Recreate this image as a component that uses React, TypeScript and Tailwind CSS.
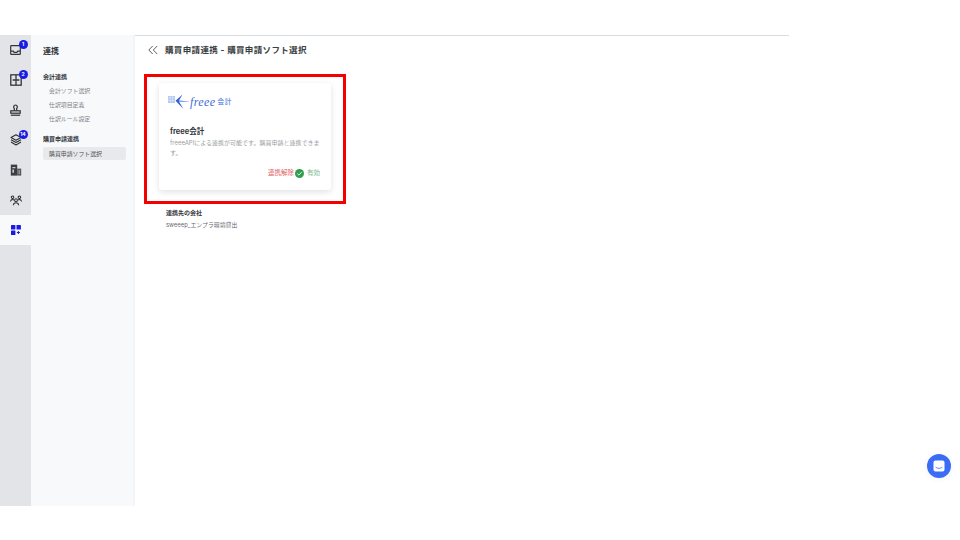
import React from "react";

const font = { fontFamily: '"Inter","Noto Sans CJK JP",sans-serif' };

function Badge({ n }: { n: string }) {
  return (
    <span className="absolute -top-[4px] left-[9px] flex h-[9px] w-[9px] items-center justify-center rounded-full bg-[#1a1ae6] text-[5px] font-bold leading-none text-white">
      {n}
    </span>
  );
}

function Inbox() {
  return (
    <svg width="11" height="10" viewBox="0 0 11 10" fill="none" stroke="#33363a" strokeWidth="1.2">
      <rect x="0.7" y="0.7" width="9.6" height="8.6" rx="0.6" />
      <path d="M0.7 6.2h2.6l.8 1.2h2.8l.8-1.2h2.6" />
    </svg>
  );
}
function Split() {
  return (
    <svg width="12" height="12" viewBox="0 0 12 12" fill="none" stroke="#33363a" strokeWidth="1.3">
      <rect x="0.8" y="0.8" width="10.4" height="10.4" />
      <path d="M6 1v10M2.6 6h6.8" />
    </svg>
  );
}
function Stamp() {
  return (
    <svg width="11" height="12" viewBox="0 0 11 12" fill="none" stroke="#2a2d31" strokeWidth="1.2">
      <path d="M4.3 6.8V4.4C3.7 3.9 3.5 3.3 3.7 2.5 3.9 1.6 4.6 1 5.5 1s1.6.6 1.8 1.5c.2.8 0 1.4-.6 1.9v2.4" />
      <rect x="0.8" y="6.8" width="9.4" height="2.4" />
      <path d="M0.8 11.2h9.4" />
    </svg>
  );
}
function Layers() {
  return (
    <svg width="12" height="12" viewBox="0 0 12 12" fill="none" stroke="#2a2d31" strokeWidth="1.1" strokeLinejoin="round">
      <path d="M6 .8 11 3.6 6 6.2 1 3.6Z" />
      <path d="M1 5.8 6 8.4l5-2.6" />
      <path d="M1 8.1 6 11l5-2.9" />
    </svg>
  );
}
function Building() {
  return (
    <svg width="12" height="12" viewBox="0 0 12 12">
      <path d="M.8.6h6.4v11H.8Z" fill="#3a3d41" />
      <path d="M7.2 4.6h4v7h-4Z" fill="#55585c" />
      <path d="M2.4 3h3v1.2h-3ZM2.4 5.4h1.6v3.4H2.4ZM8.4 6.4h1.6v1H8.4ZM8.4 8.6h1.6v1H8.4Z" fill="#c9cacd" />
    </svg>
  );
}
function Team() {
  return (
    <svg width="13" height="11" viewBox="0 0 13 11" fill="none" stroke="#2a2d31" strokeWidth="1.1">
      <circle cx="2.8" cy="2" r="1.4" />
      <circle cx="10.2" cy="2" r="1.4" />
      <circle cx="6.5" cy="5.2" r="1.5" />
      <path d="M.5 6.6c.2-1.4 1.2-2.1 2.3-2.1.7 0 1.2.2 1.6.6M12.5 6.6c-.2-1.4-1.2-2.1-2.3-2.1-.7 0-1.2.2-1.6.6M3.6 10.6c.2-1.5 1.4-2.6 2.9-2.6s2.7 1.1 2.9 2.6" />
    </svg>
  );
}
function Apps() {
  return (
    <svg width="10" height="10" viewBox="0 0 10 10" fill="#1a1ae6">
      <rect x="0" y="0" width="4.4" height="4.4" rx="0.5" />
      <rect x="5.5" y="0" width="4.4" height="4.4" rx="0.5" />
      <rect x="0" y="5.5" width="4.4" height="4.4" rx="0.5" />
      <path d="M6.9 6h1v1h1v1h-1v1h-1V8h-1V7h1Z" />
    </svg>
  );
}

function RailItem({ children, badge, active }: { children: React.ReactNode; badge?: string; active?: boolean }) {
  return (
    <div className={`flex h-[30px] items-center justify-center ${active ? "bg-[#f8f9fb]" : ""}`}>
      <div className="relative flex h-[12px] w-[12px] items-center justify-center">
        {children}
        {badge && <Badge n={badge} />}
      </div>
    </div>
  );
}

function FreeeLogo() {
  return (
    <div className="-ml-[2px] flex h-[16px] items-center">
      <svg width="24" height="16" viewBox="0 0 24 16" fill="none">
        <rect x="0" y="2" width="7" height="7" fill="#b4c9f1" />
        <path d="M0 4h7M0 6.5h7M2.3 2v7M4.6 2v7" stroke="#e3ebfa" strokeWidth="0.5" />
        <path d="M14.5 .5 7.5 6.8 15.5 15 11 7.6 23 7.7 11 6.5Z" fill="#3561d4" />
      </svg>
      <span
        className="-ml-[2px] text-[12px] italic leading-none tracking-[0.4px] text-[#3f6ad8]"
        style={{ fontFamily: '"Liberation Serif",serif' }}
      >
        freee
      </span>
      <span className="ml-[2px] text-[6.5px] font-bold leading-none tracking-[0.8px] text-[#6f90e2]">会計</span>
    </div>
  );
}

export default function App() {
  return (
    <div className="flex h-[540px] w-[960px] flex-col overflow-hidden bg-white" style={font}>
      <div className="h-[35px] shrink-0">
        <div className="mt-[34.5px] h-px w-[789px] bg-[#d5dde3]" />
      </div>
      <div className="flex h-[471px] shrink-0">
        <nav className="flex w-[31px] shrink-0 flex-col bg-[#e3e4e8]">
          <RailItem badge="1"><Inbox /></RailItem>
          <RailItem badge="2"><Split /></RailItem>
          <RailItem><Stamp /></RailItem>
          <RailItem badge="14"><Layers /></RailItem>
          <RailItem><Building /></RailItem>
          <RailItem><Team /></RailItem>
          <RailItem active><Apps /></RailItem>
        </nav>
        <aside className="w-[104px] shrink-0 bg-[#f8f9fb] pl-[12px] pr-[9px] pt-[10px] shadow-[inset_-3px_0_3px_-2px_rgba(0,0,0,0.04)]">
          <div className="text-[8px] font-bold leading-[12px] text-[#2e3236]">連携</div>
          <div className="mt-[15px] text-[6px] font-bold leading-[9px] text-[#33373b]">会計連携</div>
          <ul className="mt-[3px] text-[5.9px] leading-[14px] text-[#7d8287]">
            <li className="pl-[6px]">会計ソフト選択</li>
            <li className="pl-[6px]">仕訳項目定義</li>
            <li className="pl-[6px]">仕訳ルール設定</li>
          </ul>
          <div className="mt-[8px] text-[6px] font-bold leading-[9px] text-[#33373b]">購買申請連携</div>
          <div className="mt-[4px] h-[13px] rounded-[2px] bg-[#e8e9ec] pl-[6px] text-[5.9px] leading-[13px] text-[#4a4e53]">
            購買申請ソフト選択
          </div>
        </aside>
        <main className="min-w-0 flex-1 pl-[9px]">
          <header className="flex h-[30px] items-center pl-[4px]">
            <svg width="10" height="10" viewBox="0 0 10 10" fill="none" stroke="#4a4e53" strokeWidth="0.9">
              <path d="M4.7 1 .8 5l3.9 4M9.2 1 5.3 5l3.9 4" />
            </svg>
            <h1 className="ml-[7px] text-[8.5px] font-bold tracking-[0.35px] text-[#3a3e42]">
              購買申請連携 - 購買申請ソフト選択
            </h1>
          </header>
          <div className="mt-[9px] h-[130px] w-[202px] border-[3px] border-[#f50000] pl-[12px] pt-[6px]">
            <div className="h-[107px] w-[172px] rounded-[3px] bg-white px-[11px] pt-[11px] shadow-[0_2px_6px_rgba(0,0,0,0.12)]">
              <FreeeLogo />
              <div className="mt-[16px] text-[7.5px] font-bold leading-[11px] text-[#33373b]">freee会計</div>
              <p className="mt-[0.5px] text-[6px] leading-[10px] text-[#9a9ea3]">
                freeeAPIによる連携が可能です。購買申請と連携できます。
              </p>
              <div className="mt-[11px] flex items-center justify-end">
                <span className="text-[6.5px] text-[#e0605f]">連携解除</span>
                <svg className="ml-[1px]" width="9" height="9" viewBox="0 0 9 9">
                  <circle cx="4.5" cy="4.5" r="4.5" fill="#2f9e4f" />
                  <path d="M2.3 4.6 3.9 6.1 6.7 3.1" fill="none" stroke="#fff" strokeWidth="0.9" />
                </svg>
                <span className="ml-[3px] text-[6.5px] text-[#7dbb8c]">有効</span>
              </div>
            </div>
          </div>
          <div className="ml-[22px] mt-[4px]">
            <div className="text-[6px] font-bold leading-[10px] text-[#33373b]">連携先の会社</div>
            <div className="mt-[2px] text-[5.9px] leading-[10px] text-[#666a6f]">sweeep_エンプラ環境貸出</div>
          </div>
        </main>
      </div>
      <div className="flex-1" />
      <button className="fixed left-[927px] top-[454px] flex h-[24px] w-[24px] items-center justify-center rounded-full bg-[#3b6cf6] shadow-[0_1px_6px_rgba(0,0,0,0.06)]">
        <svg width="12" height="12" viewBox="0 0 12 12">
          <rect x="0.5" y="0.5" width="11" height="11" rx="2" fill="#fff" />
          <path d="M3 7.5c1.6 1.2 4.4 1.2 6 0" fill="none" stroke="#3b6cf6" strokeWidth="0.8" strokeLinecap="round" />
        </svg>
      </button>
    </div>
  );
}
